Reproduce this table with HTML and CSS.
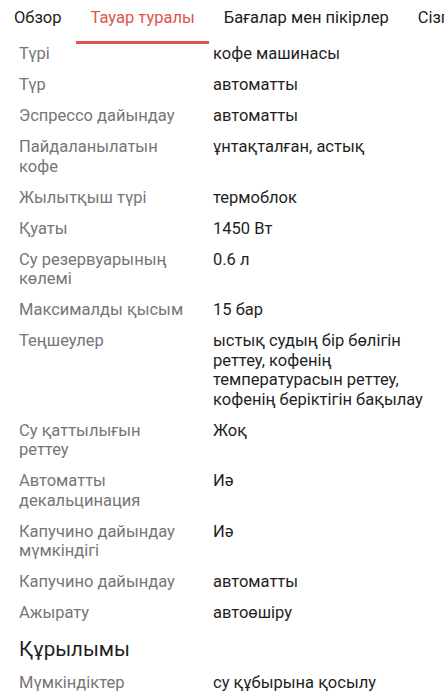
FILE: index.html
```html
<!DOCTYPE html>
<html lang="kk">
<head>
<meta charset="utf-8">
<link rel="stylesheet" href="styles.css">
</head>
<body>
<nav class="tabs">
  <span class="tab">Обзор</span>
  <span class="tab active">Тауар туралы</span>
  <span class="tab">Бағалар мен пікірлер</span>
  <span class="tab">Сізге</span>
</nav>
<dl class="specs">
  <dt>Түрі</dt><dd>кофе машинасы</dd>
  <dt>Түр</dt><dd>автоматты</dd>
  <dt>Эспрессо дайындау</dt><dd>автоматты</dd>
  <dt>Пайдаланылатын кофе</dt><dd>ұнтақталған, астық</dd>
  <dt>Жылытқыш түрі</dt><dd>термоблок</dd>
  <dt>Қуаты</dt><dd>1450 Вт</dd>
  <dt>Су резервуарының көлемі</dt><dd>0.6 л</dd>
  <dt>Максималды қысым</dt><dd>15 бар</dd>
  <dt>Теңшеулер</dt><dd>ыстық судың бір бөлігін реттеу, кофенің температурасын реттеу, кофенің беріктігін бақылау</dd>
  <dt>Су қаттылығын реттеу</dt><dd>Жоқ</dd>
  <dt>Автоматты декальцинация</dt><dd>Иә</dd>
  <dt>Капучино дайындау мүмкіндігі</dt><dd>Иә</dd>
  <dt>Капучино дайындау</dt><dd>автоматты</dd>
  <dt>Ажырату</dt><dd>автоөшіру</dd>
</dl>
<h2 class="section">Құрылымы</h2>
<dl class="specs">
  <dt>Мүмкіндіктер</dt><dd>су құбырына қосылу</dd>
</dl>
</body>
</html>
```
FILE: styles.css
```css
html, body {
  margin: 0;
  padding: 0;
  background: #ffffff;
}
body {
  font-family: Roboto, "Noto Sans", Arial, sans-serif;
  font-size: 16.5px;
  line-height: 19.5px;
  color: #212121;
  overflow: hidden;
  width: 444px;
}
.tabs {
  display: flex;
  white-space: nowrap;
  overflow: hidden;
  margin-left: -1px;
  line-height: 20px;
}
.tab {
  flex: none;
  padding: 8px 14.5px 13px;
  border-bottom: 3px solid transparent;
  color: #212121;
}
.tab:first-child {
  padding-left: 15px;
}
.tab.active {
  color: #e0544b;
  border-bottom-color: #e0544b;
}
.specs {
  display: grid;
  grid-template-columns: 170px 1fr;
  column-gap: 24px;
  margin: 0;
  padding: 0 10px 0 19px;
}
.specs dt,
.specs dd {
  margin: 0;
  padding: 0 0 11.5px;
}
.specs dt {
  color: #767676;
}
.specs dd {
  color: #1f1f1f;
}
.section {
  margin: 0;
  padding: 2.5px 19px 12px;
  font-size: 20.5px;
  line-height: 24px;
  font-weight: 400;
  color: #1f1f1f;
}
```
